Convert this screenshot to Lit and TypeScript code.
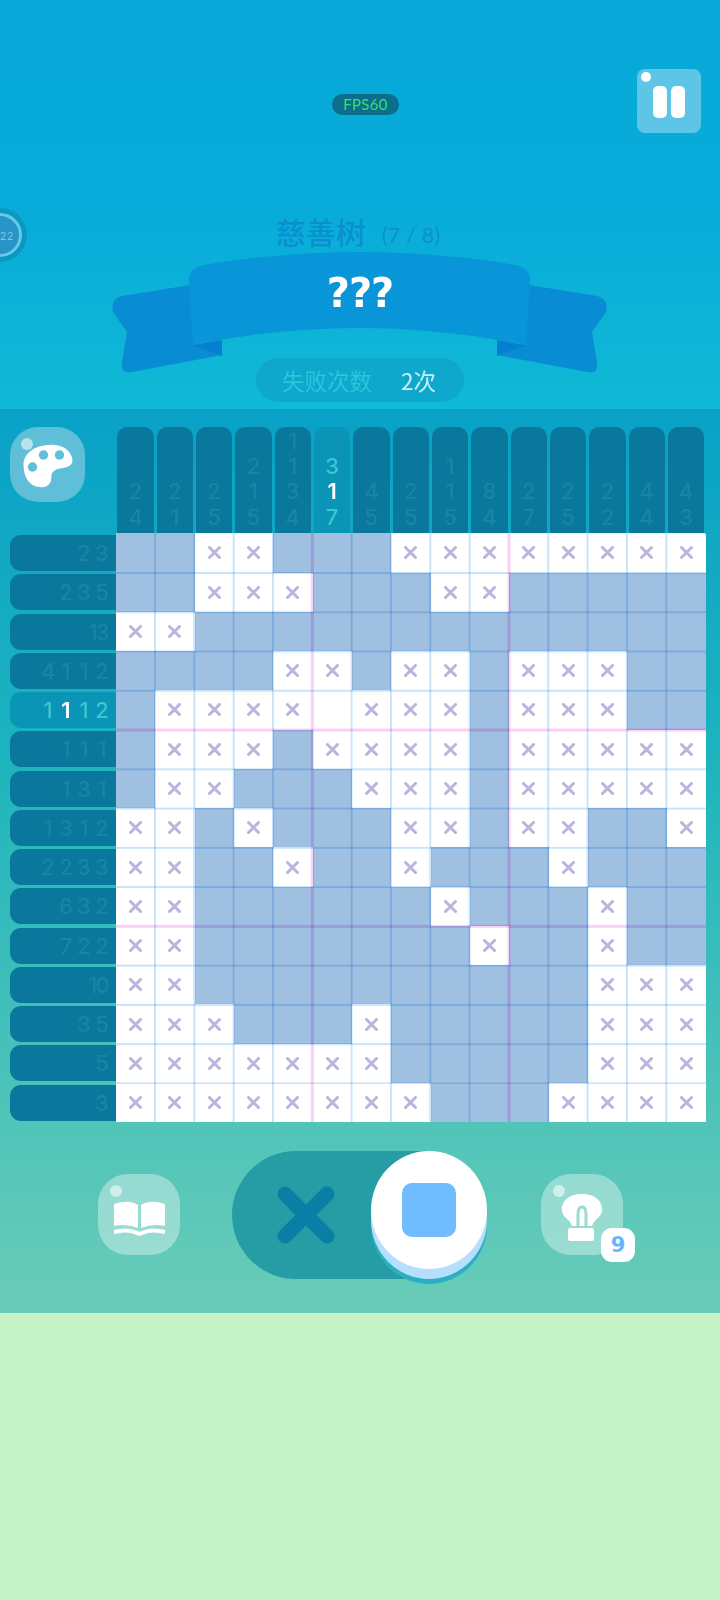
import { LitElement, html, css, svg } from "lit";
import { customElement } from "lit/decorators.js";

const GRID = [
  "..xx...xxxxxxxx",
  "..xxx...xx.....",
  "xx.............",
  "....xx.xx.xxx..",
  ".xxxx_xxx.xxx..",
  ".xxx.xxxx.xxxxx",
  ".xx...xxx.xxxxx",
  "xx.x...xx.xx..x",
  "xx..x..x...x...",
  "xx......x...x..",
  "xx.......x..x..",
  "xx..........xxx",
  "xxx...x.....xxx",
  "xxxxxxx.....xxx",
  "xxxxxxxx...xxxx",
];
const ROWS = [[2,3],[2,3,5],[13],[4,1,1,2],[1,1,1,2],[1,1,1],[1,3,1],[1,3,1,2],[2,2,3,3],[6,3,2],[7,2,2],[10],[3,5],[5],[3]];
const COLS = [[2,4],[2,1],[2,5],[2,1,5],[1,1,3,4],[3,1,7],[4,5],[2,5],[1,1,5],[8,4],[2,7],[2,5],[2,2],[4,4],[4,3]];
const ACTIVE_ROW = 4, ACTIVE_COL = 5, HILITE = 1;

const cross = svg`<svg class="cross" viewBox="0 0 13 13"><path d="M1.5 1.5 L11.5 11.5 M11.5 1.5 L1.5 11.5" /></svg>`;

@customElement("app-root")
export class AppRoot extends LitElement {
  static styles = css`
    :host { display: block; width: 720px; height: 1600px; background: #c6f2c8; font-family: "Lato", "Noto Sans CJK SC", sans-serif; overflow: hidden; }
    .head { position: relative; height: 409px; background: linear-gradient(180deg, #07a8da 0%, #08abd9 50%, #10b9d5 100%); display: flex; flex-direction: column; align-items: center; overflow: hidden; }
    .fps { margin-top: 94px; margin-left: 11px; width: 67px; height: 21px; border-radius: 11px; background: #0b6f8c; color: #3ae070; font-size: 15px; font-weight: 400; line-height: 21px; text-align: center; letter-spacing: .3px; }
    .pause { position: absolute; left: 637px; top: 69px; width: 64px; height: 64px; border-radius: 8px; background: #5dc6e7; display: flex; gap: 4px; justify-content: center; padding: 17px 0 0 0; box-sizing: border-box; }
    .pause i { display: block; width: 14px; height: 32px; border-radius: 5px; background: #fff; }
    .pause::before { content: ""; position: absolute; left: 4px; top: 3px; width: 10px; height: 10px; border-radius: 50%; background: #fff; }
    .timer { position: absolute; left: -27px; top: 208px; width: 54px; height: 54px; }
    .timer svg { display: block; }
    .timer span { position: absolute; left: 27px; top: 21px; font-size: 11px; line-height: 13px; color: #7cc8e0; white-space: nowrap; letter-spacing: .5px; }
    .title { margin-top: 100px; margin-left: -4px; height: 32px; display: flex; align-items: center; gap: 16px; color: #0a90cf; white-space: nowrap; }
    .title b { font-size: 30px; font-weight: 500; line-height: 32px; font-family: "Noto Sans CJK SC", sans-serif; }
    .title span { font-size: 22px; font-weight: 400; padding-top: 6px; }
    .ribbon { position: relative; width: 720px; height: 124px; margin-top: 3px; flex: none; }
    .ribbon svg { display: block; }
    .q { position: absolute; left: 0; right: 0; top: 20px; text-align: center; font-size: 40px; font-weight: 700; line-height: 46px; color: #fff; letter-spacing: -1px; font-family: "DejaVu Sans", sans-serif; }
    .fail { position: absolute; left: 256px; top: 358px; width: 208px; height: 44px; border-radius: 22px; background: #0ea8cd; display: flex; align-items: center; font-family: "Noto Sans CJK SC", sans-serif; font-size: 22.5px; box-sizing: border-box; padding-left: 26px; gap: 29px; }
    .fail .l { color: #2cc5dd; }
    .fail .v { color: #c6f0f7; }

    .board { height: 904px; box-sizing: border-box; padding: 18px 14px 0 9.5px; background: linear-gradient(180deg, #09a1c7 0%, #1cb4be 38%, #4fc4b8 78%, #6accb8 100%); display: grid; grid-template-columns: 106.5px 590px; grid-template-rows: 106.3px 589px; font-family: "Inter", sans-serif; }
    .icobtn { position: relative; background: rgba(255,255,255,.36); border-radius: 30px; }
    .icobtn::before { content: ""; position: absolute; border-radius: 50%; background: rgba(255,255,255,.55); }
    .palette { width: 75.5px; height: 75px; border-radius: 28px; background: #5fbfd9; }
    .palette::before { left: 11px; top: 11px; width: 12px; height: 12px; }
    .palette svg { display: block; }
    .colclues { display: grid; grid-template-columns: repeat(15, 1fr); }
    .cc { margin: 0 1.8px 0 1.3px; background: #0a789c; border-radius: 10px 10px 0 0; display: flex; flex-direction: column; justify-content: flex-end; align-items: center; padding-bottom: 3px; font-size: 22px; font-weight: 500; line-height: 25.4px; color: #1b84a5; }
    .cc.on { background: #0a94b5; color: #36c9d2; }
    .on .hi { color: #fff; font-weight: 600; }
    .rowclues { display: grid; grid-template-rows: repeat(15, 1fr); }
    .rc { margin: 1.7px 0 1.6px; background: #0a789c; border-radius: 11px 0 0 11px; display: flex; justify-content: flex-end; align-items: center; padding-right: 7px; gap: 4px; font-size: 22px; font-weight: 500; color: #1b84a5; }
    .rc.on { background: #0a94b5; color: #36c9d2; }
    .rc span { width: 14px; text-align: center; }
    .rc span.w { width: 22px; letter-spacing: -2px; }
    .grid { position: relative; display: grid; grid-template-columns: repeat(15, 1fr); grid-template-rows: repeat(15, 1fr); background: #fff; border-radius: 0 3px 0 0; overflow: hidden; }
    .c { display: flex; align-items: center; justify-content: center; background: #fff; }
    .c.f { background: #9fc0e0; }
    .cross { width: 13px; height: 13px; display: block; fill: none; stroke: #b9b5dc; stroke-width: 3; stroke-linecap: round; }
    .vl, .hl { position: absolute; mix-blend-mode: multiply; pointer-events: none; }
    .vl { left: 38.33px; width: 513.34px; top: 0; bottom: 0;
      background-image: linear-gradient(90deg, #fbd0f6 3px, transparent 3px), linear-gradient(90deg, #c8e4fb 2px, transparent 2px);
      background-size: 196.67px 100%, 39.33px 100%;
      background-position: 156.83px 0, 0 0;
    }
    .hl { top: 38.27px; height: 512.46px; left: 0; right: 0;
      background-image: linear-gradient(180deg, #fbd0f6 3px, transparent 3px), linear-gradient(180deg, #c8e4fb 2px, transparent 2px);
      background-size: 100% 196.33px, 100% 39.27px;
      background-position: 0 156.57px, 0 0;
    }
    .controls { grid-column: 1 / 3; margin-top: 29px; position: relative; height: 133px; display: flex; align-items: flex-start; margin-left: -9.5px; }
    .book { margin: 23px 0 0 98px; width: 82px; height: 81px; flex: none; }
    .book::before, .hint::before { left: 12px; top: 11px; width: 12px; height: 12px; }
    .book svg, .hint svg { display: block; }
    .toggle { position: relative; margin-left: 52px; width: 250px; height: 128px; border-radius: 64px; background: #269ca5; flex: none; }
    .toggle > svg { position: absolute; left: 45px; top: 35px; display: block; }
    .knob { position: absolute; left: 139px; top: 0; width: 116px; height: 118px; border-radius: 50%; background: #fff; box-shadow: 0 10px 0 #b5dffc, 0 15px 0 #2ab0c1; display: flex; align-items: center; justify-content: center; }
    .knob i { display: block; width: 54px; height: 54px; border-radius: 10px; background: #70bcff; }
    .hint { margin: 23px 0 0 59px; width: 82px; height: 81px; flex: none; }
    .badge { position: absolute; left: 60px; top: 54px; width: 34px; height: 34px; border-radius: 11px; background: #fff; color: #6ab4ff; font-family: "DejaVu Sans", sans-serif; font-size: 21px; font-weight: 700; line-height: 34px; text-align: center; }
  `;

  render() {
    return html`
      <div class="head">
        <div class="fps">FPS60</div>
        <div class="pause"><i></i><i></i></div>
        <div class="timer">
          <svg width="54" height="54" viewBox="0 0 54 54">
            <circle cx="27" cy="27" r="27" fill="#0a98c0" />
            <circle cx="27" cy="27" r="20" fill="#2a93c8" />
            <circle cx="27" cy="27" r="20.5" fill="none" stroke="#63cbe8" stroke-width="3" />
          </svg>
          <span>22</span>
        </div>
        <div class="title"><b>慈善树</b><span>(7 / 8)</span></div>
        <div class="ribbon">
          <svg width="720" height="124" viewBox="0 250 720 124">
            <path fill="#0a8cd4" d="M190 285 L122 296 Q110 299 113 312 L127 332 L122 362 Q120 374 132 372 L222 355 L195 345 Z" />
            <path fill="#0580d0" d="M193 345 L222 340 L222 356 Z" />
            <path fill="#0a8cd4" d="M529 285 L597 296 Q609 299 606 312 L592 332 L597 362 Q599 374 587 372 L497 355 L524 345 Z" />
            <path fill="#0580d0" d="M526 345 L497 340 L497 356 Z" />
            <path fill="#0896d8" d="M189 280 Q189 268 203 265 Q360 239 516 265 Q530 268 530 280 L526 345 Q360 311 193 345 Z" />
          </svg>
          <div class="q">???</div>
        </div>
        <div class="fail"><span class="l">失败次数</span><span class="v">2次</span></div>
      </div>
      <div class="board">
        <div class="icobtn palette">
          <svg width="75" height="75" viewBox="0 0 75 75">
            <g transform="translate(-9.5,-427)">
              <path fill="#fff" d="M47 445 C60 443 72 450 72 461 C71 469 60 467 55 470 C49 473 52 478 50 482 C47 489 38 488 32 485 C26 481 23 474 23 465 C23 453 34 446 47 445 Z" />
              <circle cx="43" cy="455" r="4.7" fill="#5fbfd9" />
              <circle cx="59" cy="455" r="4.7" fill="#5fbfd9" />
              <circle cx="32" cy="467" r="4.7" fill="#5fbfd9" />
            </g>
          </svg>
        </div>
        <div class="colclues">
          ${COLS.map((c, i) => html`<div class="cc ${i === ACTIVE_COL ? "on" : ""}">
            ${c.map((n, j) => html`<span class="${j === HILITE ? "hi" : ""}">${n}</span>`)}
          </div>`)}
        </div>
        <div class="rowclues">
          ${ROWS.map((r, i) => html`<div class="rc ${i === ACTIVE_ROW ? "on" : ""}">
            ${r.map((n, j) => html`<span class="${j === HILITE ? "hi" : ""} ${n > 9 ? "w" : ""}">${n}</span>`)}
          </div>`)}
        </div>
        <div class="grid">
          ${GRID.flatMap((row) => row.split("").map((ch) => html`<div class="c ${ch === "." ? "f" : ""}">${ch === "x" ? cross : ""}</div>`))}
          <div class="vl"></div>
          <div class="hl"></div>
        </div>
        <div class="controls">
          <div class="icobtn book">
            <svg width="82" height="81" viewBox="0 0 82 81">
              <path fill="#fff" d="M16 30 Q30 25 40 31 V54 Q28 49 16 52 Z" />
              <path fill="#fff" d="M43 31 Q53 25 67 30 V52 Q55 49 43 54 Z" />
              <path fill="none" stroke="#fff" stroke-width="4" d="M16 58 Q30 54 41.5 60 Q53 54 67 58" />
            </svg>
          </div>
          <div class="toggle">
            <svg width="58" height="58" viewBox="0 0 58 58">
              <path d="M8 8 L50 50 M50 8 L8 50" fill="none" stroke="#0a7fa5" stroke-width="15" stroke-linecap="round" />
            </svg>
            <div class="knob"><i></i></div>
          </div>
          <div class="icobtn hint">
            <svg width="82" height="81" viewBox="0 0 82 81">
              <path fill="#fff" d="M41 20 C54 20 62 27 61 37 C60 44 53 45 51 52 H31 C29 45 22 44 21 37 C20 27 28 20 41 20 Z" />
              <path fill="none" stroke="#9adccf" stroke-width="3" d="M37 52 V40 Q37 33 41 33 Q45 33 45 40 V52" />
              <rect x="27" y="54" width="26" height="13" rx="2" fill="#fff" />
            </svg>
            <div class="badge">9</div>
          </div>
        </div>
      </div>
    `;
  }
}
